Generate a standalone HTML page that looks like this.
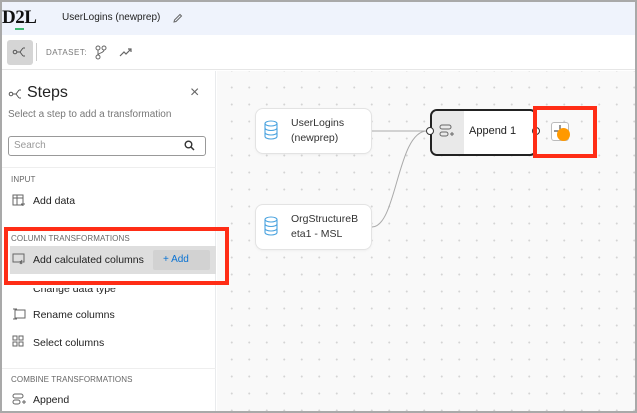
<!DOCTYPE html><html><head><style>
*{margin:0;padding:0;box-sizing:border-box}
body{width:637px;height:413px;background:#a9a9a9;font-family:"Liberation Sans",sans-serif;position:relative;overflow:hidden;color:#16191f}
#f{position:absolute;left:2px;top:2px;width:633px;height:409px;background:#fff;overflow:hidden}
.hd{position:absolute;left:0;top:0;width:633px;height:33px;background:#eff3fc}
.tb{position:absolute;left:0;top:33px;width:633px;height:35px;background:#fff;border-bottom:1px solid #e6e6e6}
.lp{position:absolute;left:0;top:69px;width:214px;height:340px;background:#fff;border-right:1px solid #e9ebed}
.cv{position:absolute;left:215px;top:69px;width:418px;height:340px;background-color:#f9f9f9;background-image:radial-gradient(circle,#d4d4d4 0.8px,transparent 1.2px);background-size:17.5px 17px;background-position:6px 8px}
.a{position:absolute;white-space:nowrap}
.node{position:absolute;background:#fff;border-radius:7px;box-shadow:0 0 0 1px #e3e3e3,0 1px 3px rgba(0,0,0,.08);font-size:10.5px;line-height:15px;color:#333}
.sec{font-size:8px;color:#666;letter-spacing:.1px}
.it{font-size:10.5px;color:#222}
</style></head><body><div id="f">
<div class="hd"></div>
<div class="a" style="left:0;top:5px;font-family:'Liberation Serif',serif;font-weight:bold;font-size:19px;color:#111;letter-spacing:-0.5px">D<span style="border-bottom:2px solid #3eb870;line-height:14px">2</span>L</div>
<div class="a" style="left:60px;top:10px;font-size:10px;color:#222">UserLogins (newprep)</div>
<svg class="a" style="left:170px;top:11px" width="11" height="11" viewBox="0 0 11 11"><path d="M2 9 L2.5 7 L8 1.5 L9.5 3 L4 8.5 Z" fill="none" stroke="#666" stroke-width="1"/></svg>
<div class="tb"></div>
<div class="a" style="left:5px;top:38px;width:26px;height:25px;background:#d5d5d5;border-radius:3px"></div>
<svg class="a" style="left:10px;top:44px" width="16" height="12" viewBox="0 0 16 12"><circle cx="3" cy="6" r="1.8" fill="none" stroke="#555"/><path d="M5 6h3l3-4M8 6l3 4M11 2h2M11 10h2" fill="none" stroke="#555"/></svg>
<div class="a" style="left:34px;top:41px;width:1px;height:18px;background:#ccc"></div>
<div class="a" style="left:44px;top:46px;font-size:8px;color:#777;letter-spacing:.5px">DATASET:</div>
<svg class="a" style="left:93px;top:43px" width="12" height="15" viewBox="0 0 12 15"><circle cx="3" cy="3" r="2" fill="none" stroke="#666"/><circle cx="9" cy="3" r="2" fill="none" stroke="#666"/><circle cx="3" cy="12" r="2" fill="none" stroke="#666"/><path d="M3 5v5M9 5c0 3-6 3-6 5" fill="none" stroke="#666"/></svg>
<svg class="a" style="left:117px;top:45px" width="14" height="10" viewBox="0 0 14 10"><path d="M1 9l4-4 2 2 5-5M9 2h3v3" fill="none" stroke="#666" stroke-width="1.2"/></svg>
<div class="lp"></div>
<svg class="a" style="left:6px;top:86px" width="16" height="12" viewBox="0 0 16 12"><circle cx="3" cy="6" r="1.8" fill="none" stroke="#555"/><path d="M5 6h3l3-4M8 6l3 4M11 2h2M11 10h2" fill="none" stroke="#555"/></svg>
<div class="a" style="left:25px;top:82px;font-size:16px;color:#222">Steps</div>
<div class="a" style="left:188px;top:82px;font-size:16px;color:#666">×</div>
<div class="a" style="left:6px;top:107px;font-size:10px;color:#777">Select a step to add a transformation</div>
<div class="a" style="left:6px;top:134px;width:198px;height:20px;border:1px solid #999;border-radius:3px"></div>
<div class="a" style="left:12px;top:138px;font-size:10px;color:#999">Search</div>
<svg class="a" style="left:182px;top:138px" width="11" height="11" viewBox="0 0 11 11"><circle cx="4.5" cy="4.5" r="3.3" fill="none" stroke="#333" stroke-width="1.4"/><path d="M7 7l3 3" stroke="#333" stroke-width="1.5"/></svg>
<div class="a" style="left:0;top:165px;width:214px;height:1px;background:#eee"></div>
<div class="a sec" style="left:9px;top:173px">INPUT</div>
<svg class="a" style="left:10px;top:192px" width="13" height="13" viewBox="0 0 13 13"><rect x="1" y="1" width="10" height="10" fill="none" stroke="#666"/><path d="M1 4h10M5 1v10M9 10h4M11 8v4" stroke="#666" fill="none"/></svg>
<div class="a it" style="left:31px;top:193px">Add data</div>
<div class="a sec" style="left:9px;top:232px">COLUMN TRANSFORMATIONS</div>
<div class="a" style="left:8px;top:244px;width:206px;height:28px;background:#dedede"></div>
<svg class="a" style="left:10px;top:251px" width="14" height="12" viewBox="0 0 14 12"><rect x="1" y="1" width="11" height="8" fill="none" stroke="#666"/><path d="M8 8l2 3M10 7l-2 4" stroke="#666"/></svg>
<div class="a it" style="left:31px;top:252px">Add calculated columns</div>
<div class="a" style="left:151px;top:248px;width:57px;height:20px;background:#d2d2d2;border-radius:2px;font-size:10px;color:#0972d3;line-height:20px;padding-left:10px">+ Add</div>
<div class="a it" style="left:31px;top:281px;clip-path:inset(5px 0 0 0)">Change data type</div>
<svg class="a" style="left:10px;top:306px" width="14" height="12" viewBox="0 0 14 12"><rect x="3" y="2" width="10" height="8" fill="none" stroke="#666"/><path d="M1 1h4M1 11h4M3 1v10" stroke="#666"/></svg>
<div class="a it" style="left:31px;top:307px">Rename columns</div>
<svg class="a" style="left:10px;top:333px" width="13" height="13" viewBox="0 0 13 13"><rect x="1" y="1" width="4" height="4" fill="none" stroke="#666"/><rect x="7" y="1" width="4" height="4" fill="none" stroke="#666"/><rect x="1" y="7" width="4" height="4" fill="none" stroke="#666"/><rect x="7" y="7" width="4" height="4" fill="none" stroke="#666"/></svg>
<div class="a it" style="left:31px;top:335px">Select columns</div>
<div class="a" style="left:0;top:366px;width:214px;height:1px;background:#eee"></div>
<div class="a sec" style="left:9px;top:373px">COMBINE TRANSFORMATIONS</div>
<svg class="a" style="left:10px;top:391px" width="14" height="12" viewBox="0 0 14 12"><rect x="1" y="1" width="10" height="4" rx="2" fill="none" stroke="#666"/><rect x="1" y="7" width="7" height="4" rx="2" fill="none" stroke="#666"/><path d="M10 9h4M12 7v4" stroke="#666"/></svg>
<div class="a it" style="left:31px;top:392px">Append</div>
<div class="cv"></div>
<div class="a" style="left:2px;top:225px;width:225px;height:58px;border:4px solid #ff2d16;z-index:5"></div>
<svg class="a" style="left:0;top:0" width="633" height="409"><path d="M370 129 H425" fill="none" stroke="#aaa"/><path d="M370 225 C395 225 395 129 425 129" fill="none" stroke="#aaa"/></svg>
<div class="node" style="left:254px;top:107px;width:115px;height:44px"><div class="a" style="left:35px;top:7px">UserLogins<br>(newprep)</div></div>
<div class="node" style="left:254px;top:203px;width:115px;height:44px"><div class="a" style="left:35px;top:7px">OrgStructureB<br>eta1 - MSL</div></div>
<svg class="a" style="left:262px;top:118px" width="14" height="20" viewBox="0 0 14 20"><g fill="none" stroke="#4aa3df" stroke-width="1.1"><ellipse cx="7" cy="3.5" rx="6" ry="2.5"/><path d="M1 3.5v13c0 1.4 2.7 2.5 6 2.5s6-1.1 6-2.5v-13M1 8c0 1.4 2.7 2.5 6 2.5S13 9.4 13 8M1 12.5c0 1.4 2.7 2.5 6 2.5s6-1.1 6-2.5"/></g></svg>
<svg class="a" style="left:262px;top:214px" width="14" height="20" viewBox="0 0 14 20"><g fill="none" stroke="#4aa3df" stroke-width="1.1"><ellipse cx="7" cy="3.5" rx="6" ry="2.5"/><path d="M1 3.5v13c0 1.4 2.7 2.5 6 2.5s6-1.1 6-2.5v-13M1 8c0 1.4 2.7 2.5 6 2.5S13 9.4 13 8M1 12.5c0 1.4 2.7 2.5 6 2.5s6-1.1 6-2.5"/></g></svg>
<div class="a" style="left:428px;top:107px;width:107px;height:47px;border:2px solid #222;border-radius:7px;background:#fff;overflow:hidden"><div style="width:32px;height:100%;background:#e9e9e9"></div></div>
<svg class="a" style="left:437px;top:122px" width="16" height="14" viewBox="0 0 16 14"><rect x="1" y="1" width="11" height="4" rx="2" fill="none" stroke="#666"/><rect x="1" y="8" width="8" height="4" rx="2" fill="none" stroke="#666"/><path d="M11 10h4M13 8v4" stroke="#666"/></svg>
<div class="a" style="left:467px;top:123px;font-size:11px;color:#222">Append 1</div>
<div class="a" style="left:424px;top:125px;width:8px;height:8px;border-radius:50%;border:1.5px solid #333;background:#fff"></div>
<div class="a" style="left:530px;top:125px;width:8px;height:8px;border-radius:50%;border:1.5px solid #333;background:#fff"></div>
<div class="a" style="left:549px;top:120px;width:18px;height:19px;border:1px solid #bbb;border-radius:3px;background:#fff"></div>
<svg class="a" style="left:551px;top:122px" width="14" height="14" viewBox="0 0 14 14"><path d="M7 1v12M1 7h12" stroke="#555" stroke-width="1.2"/></svg>
<div class="a" style="left:555px;top:126px;width:13px;height:13px;border-radius:50%;background:#ff9900"></div>
<div class="a" style="left:531px;top:104px;width:64px;height:52px;border:4px solid #ff2d16"></div>
</div></body></html>
